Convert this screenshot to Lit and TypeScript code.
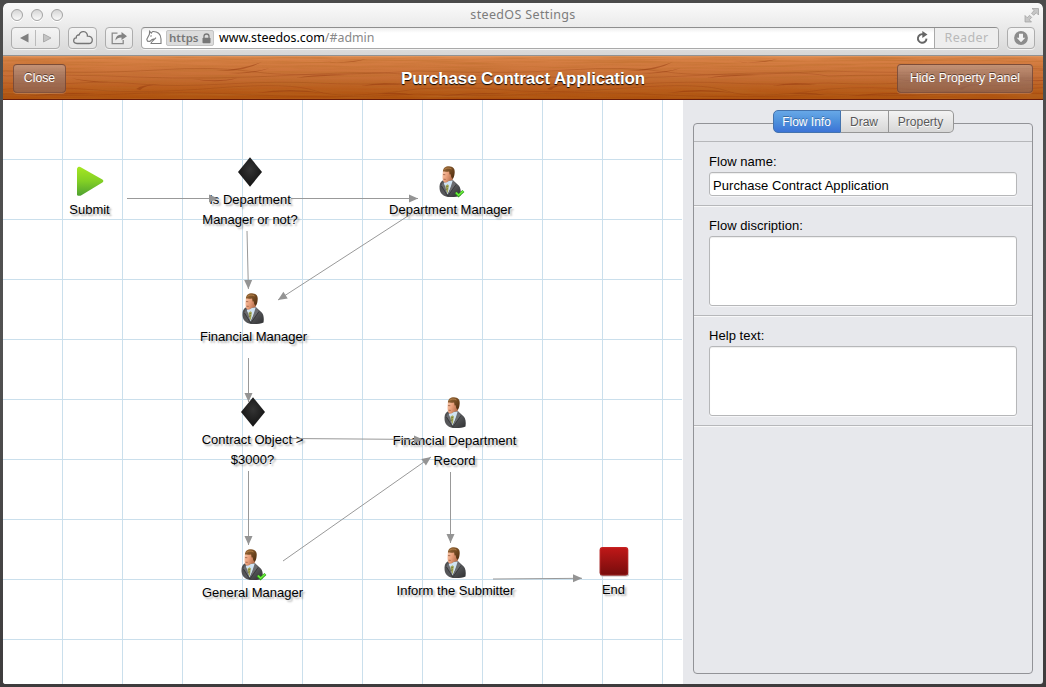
import { LitElement, html, svg, css } from "lit";
import { customElement, state } from "lit/decorators.js";

type Kind = "start" | "decision" | "person" | "approver" | "end";
interface FlowNode { kind: Kind; x: number; y: number; iconX: number; iconY: number; lines: string[]; }

// x is the label's centre, y the top of its first line, both in canvas coordinates.
const NODES: FlowNode[] = [
  { kind: "start", x: 86.5, y: 100, iconX: 73, iconY: 66, lines: ["Submit"] },
  { kind: "decision", x: 247, y: 90, iconX: 235, iconY: 57, lines: ["Is Department", "Manager or not?"] },
  { kind: "approver", x: 447.5, y: 100, iconX: 435, iconY: 65, lines: ["Department Manager"] },
  { kind: "person", x: 250.5, y: 227, iconX: 238, iconY: 192, lines: ["Financial Manager"] },
  { kind: "decision", x: 249.5, y: 330, iconX: 238, iconY: 297, lines: ["Contract Object >", "$3000?"] },
  { kind: "person", x: 451.5, y: 331, iconX: 440, iconY: 296, lines: ["Financial Department", "Record"] },
  { kind: "approver", x: 249.5, y: 483, iconX: 237, iconY: 448, lines: ["General Manager"] },
  { kind: "person", x: 452.5, y: 481, iconX: 440, iconY: 446, lines: ["Inform the Submitter"] },
  { kind: "end", x: 610.5, y: 480, iconX: 596, iconY: 446, lines: ["End"] },
];

const ARROWS: number[][] = [
  [124, 98.5, 215, 98.5],
  [288, 98.5, 415, 98.5],
  [244, 131, 245.4, 189],
  [408, 114, 275, 200],
  [245.5, 258, 245.5, 302],
  [288, 338.5, 420, 339.5],
  [245.5, 371, 245.5, 445],
  [280, 461, 428, 357],
  [447.5, 372, 447.5, 443],
  [490, 479, 579, 478.3],
];

const tick = svg`<path d="M17.8 27.6l2.8 3 4.8-4.6" fill="none" stroke="#2f9c1d" stroke-width="2.8"/><path d="M17.9 27.4l2.7 2.8 4.6-4.2" fill="none" stroke="#6df23c" stroke-width="1.5"/>`;

function person(approver: boolean) {
  return html`<svg width="27" height="34" viewBox="0 0 27 34">
    <defs>
      <linearGradient id="suit" x1="0" y1="0" x2="1" y2="1"><stop offset="0" stop-color="#4a4a4c"/><stop offset=".5" stop-color="#58595c"/><stop offset="1" stop-color="#2e2f31"/></linearGradient>
      <linearGradient id="skin" x1="0" y1="0" x2="1" y2=".5"><stop offset="0" stop-color="#fbd0b3"/><stop offset=".5" stop-color="#eaa17d"/><stop offset="1" stop-color="#b26a48"/></linearGradient>
      <linearGradient id="hair" x1="0" y1="0" x2="1" y2="1"><stop offset="0" stop-color="#9a6a38"/><stop offset="1" stop-color="#4c2a0d"/></linearGradient>
    </defs>
    <path d="M4.500 15.500C2 17 1.200 20 1.600 24c.4 4.300 3.600 7.400 8.200 7.900 4.700.4 9.600 0 12.700-1.500.7-4.300.1-8.400-2-10.200L15 15.200z" fill="url(#suit)"/>
    <path d="M5.600 17.800l4.200-1.600 4.700-.6 1 1.700-3.400 6.700-2.600 5.600-2.500-5z" fill="#cfe3f3"/>
    <path d="M7.600 20.400l2.200-1.200 1 1.400-1 8-2.200-4.600z" fill="#a9a957"/>
    <path d="M7.900 22l2.400-.8M8 24.400l2-.7" stroke="#6f7736" stroke-width=".8"/>
    <path d="M5 16.800l-1.500 4 6.200 10-2.400-9zM14.800 15.200l3.200 4.200-3.800 5.200-4.500 6.400 2.400-7.300z" fill="#6b6c70"/>
    <path d="M9.900 31l4.500-6.400 3.700-5.200M3.500 21l6.200 10" fill="none" stroke="#2b2c2e" stroke-width=".7"/>
    <path d="M5 6c-.3 2-.6 3.800-.5 6 .1 2.200.5 5 2 5.600 1.500.5 2.700-.2 3.900-1.500l4.300-1.200.4-3.400L16 6l-5-3z" fill="url(#skin)"/>
    <path d="M4.900 6.500C5 3 7.700 1.200 11 1.300c4 .2 6 2.500 5.700 5.900-.2 2.600-.6 4.800-1.900 6.900l-1.500-1.800-.7-3.100-1 .4-.5-3.200C9.200 6.800 7 6.700 4.900 6.500z" fill="url(#hair)"/>
    <path d="M6.500 4.400c2-1.700 4.600-1.700 7-.4" fill="none" stroke="#bd8850" stroke-width=".8"/>
    <path d="M5 9.600l2.300.1M5.500 14.200l2.200.2" stroke="#8d4f37" stroke-width=".7"/>
    ${approver ? tick : null}
  </svg>`;
}

function icon(kind: Kind) {
  switch (kind) {
    case "start":
      return html`<svg width="30" height="32" viewBox="0 0 30 32">
        <defs><linearGradient id="g" x1="0" y1="0" x2="0" y2="1"><stop offset="0" stop-color="#a6e622"/><stop offset=".5" stop-color="#82cf25"/><stop offset="1" stop-color="#4fa131"/></linearGradient></defs>
        <path d="M2 1.200c1.200-.6 2.200-.3 3.200.2L26.400 13.600c1.300.8 1.300 2.100 0 3L5.400 29.200c-1 .6-3.400 1-4.400-.3V3Q1 1.700 2 1.200z" fill="url(#g)"/></svg>`;
    case "decision":
      return html`<svg width="24" height="30" viewBox="0 0 24 30">
        <defs><radialGradient id="d" cx=".5" cy=".42" r=".6"><stop offset="0" stop-color="#343434"/><stop offset="1" stop-color="#111"/></radialGradient></defs>
        <path d="M12 0.200L24 15 12 29.800 0 15z" fill="url(#d)"/></svg>`;
    case "end":
      return html`<svg width="32" height="32" viewBox="0 0 32 32">
        <defs><linearGradient id="r" x1="0" y1="0" x2="0" y2="1"><stop offset="0" stop-color="#c11818"/><stop offset="1" stop-color="#750c0c"/></linearGradient></defs>
        <rect x="1" y="27" width="29" height="3.500" rx="2" fill="#c5b9b9"/>
        <rect x=".6" y="1" width="28.700" height="28.600" rx="3" fill="url(#r)"/>
        <rect x="1.300" y="1.700" width="27.300" height="27.200" rx="2.500" fill="none" stroke="#d94343" stroke-opacity=".3"/></svg>`;
    default:
      return person(kind === "approver");
  }
}

@customElement("browser-bar")
class BrowserBar extends LitElement {
  static styles = css`
    :host { display: grid; grid-template-rows: 23px 30px; height: 53px; box-sizing: border-box; border-bottom: 1px solid #929292; border-radius: 5px 5px 0 0; background: linear-gradient(#fafafa, #e9e9e9 50%, #d7d7d7); color: #777; }
    .titlebar { display: grid; grid-template-columns: 80px 1fr 80px; align-items: center; }
    .lights { display: flex; gap: 8px; padding-left: 8px; }
    .light { width: 12px; height: 12px; box-sizing: border-box; border: 1px solid #a3a3a3; border-radius: 50%; background: linear-gradient(#d6d6d6, #fafafa); box-shadow: 0 1px 0 #fff; }
    .title { text-align: center; font: 12.5px/22px "Noto Sans", sans-serif; color: #7c7c7c; letter-spacing: .35px; }
    .expand { justify-self: end; padding-right: 3px; height: 16px; }
    .tools { display: flex; padding: 1px 8px 0; }
    .btn { height: 22px; box-sizing: border-box; border: 1px solid #adadad; border-radius: 4px; background: linear-gradient(#f4f4f4, #e5e5e5); display: flex; align-items: center; justify-content: center; box-shadow: 0 1px 0 #f4f4f4; }
    .nav { width: 49px; } .cloud { width: 29px; margin-left: 8px; } .share { width: 28px; margin-left: 8px; }
    .address { flex: 1; margin-left: 8px; height: 22px; box-sizing: border-box; display: flex; align-items: center; border: 1px solid #a9a9a9; border-top-color: #8e8e8e; border-radius: 4px; background: linear-gradient(#eee, #fff 5px); overflow: hidden; font: 12.4px/20px "Noto Sans", sans-serif; box-shadow: 0 1px 0 #f4f4f4; }
    .horse { margin-left: 4px; }
    .https { display: flex; align-items: center; gap: 3px; height: 16px; box-sizing: border-box; margin-left: 4px; width: 48px; padding-left: 2px; border: 1px solid #c4c4c4; border-radius: 2px; background: #dcdcdc; color: #777; font-size: 11.5px; font-weight: 600; line-height: 14px; }
    .url { margin-left: 5px; color: #000; flex: 1; white-space: nowrap; } .path { color: #888; }
    .reader { width: 63px; height: 20px; margin-left: 5px; border-left: 1px solid #a9a9a9; background: #eee; color: #b9b9b9; text-align: center; font-size: 12.5px; letter-spacing: .35px; }
    .down { width: 28px; margin-left: 8px; }
  `;
  render() {
    return html`
      <div class="titlebar">
        <div class="lights"><span class="light"></span><span class="light"></span><span class="light"></span></div>
        <div class="title">steedOS Settings</div>
        <svg class="expand" width="16" height="16" viewBox="0 0 16 16"><path d="M8 1.500h6.500V8l-2.200-2.200L9.600 8.300 7.500 6.200l2.700-2.600zM1 15h6.500l-2.200-2.200 2.400-2.400-2.100-2.100-2.400 2.400L1 8.500z" fill="#c6c6c6" stroke="#9d9d9d" stroke-width=".7"/></svg>
      </div>
      <div class="tools">
        <div class="btn nav"><svg width="47" height="20"><path d="M16.500 5.500v9L8 10z" fill="#808080"/><path d="M23.500 2v16" stroke="#bbb"/><path d="M31.500 6v8l7.500-4z" fill="#c4c4c4" stroke="#999" stroke-width=".7"/></svg></div>
        <div class="btn cloud"><svg width="22" height="16" viewBox="0 0 22 16"><path d="M5 13.500C2.500 13.500 1.500 12 1.700 10.400 1.900 8.700 3 7.800 4.300 7.900 4 6 5.300 4.700 7 5.100 7.800 2.600 9.600 1.500 11.700 1.700c2.500.2 3.900 2 3.700 4.400 2.900-.2 4.900 1.300 4.900 3.600S18.700 13.500 16.900 13.500z" fill="none" stroke="#757575" stroke-width="1.300"/></svg></div>
        <div class="btn share"><svg width="18" height="16" viewBox="0 0 18 16"><path d="M7.500 3.200H2.200v10.400h11V10" fill="none" stroke="#8a8a8a" stroke-width="1.300"/><path d="M5.500 10.500c.2-4 2.300-5.700 6-5.700V2L17 6.200l-5.500 3.700V7.400C8.300 7.400 6.800 8.400 5.500 10.500z" fill="#828282"/></svg></div>
        <div class="address">
          <svg class="horse" width="16" height="16" viewBox="0 0 16 16"><path d="M6.500 1.500C11.500 1.200 15 4 15 9v4.500H5c.3-2.200 2.500-2.800 3.800-4.600M6.500 1.500L5.300 3.200 3.600 1.300l-.2 3L.8 9.300l.7 1.900 2.400.2L6 9.600l2.800-.7L10 7.600M4.300 6.300l1.500-.5" fill="none" stroke="#7d7d7d" stroke-width="1.100"/></svg>
          <span class="https">https<svg width="9" height="11" viewBox="0 0 9 11"><path d="M2 5V3.300Q2 1 4.500 1T7 3.300V5" fill="none" stroke="#777" stroke-width="1.300"/><rect x=".5" y="4.800" width="8" height="5.500" rx=".8" fill="#777"/></svg></span>
          <span class="url">www.steedos.com<span class="path">/#admin</span></span>
          <svg width="13" height="14" viewBox="0 0 13 14"><path d="M10.500 7.600A4.300 4.300 0 1 1 7.300 3.300" fill="none" stroke="#666" stroke-width="1.900"/><path d="M6.300 0l5.200 3.600-5.200 3.300z" fill="#666"/></svg>
          <span class="reader">Reader</span>
        </div>
        <div class="btn down"><svg width="16" height="16" viewBox="0 0 16 16"><circle cx="8" cy="8" r="6.900" fill="#8c8c8c"/><path d="M6 3.800h4v4h2.300L8 12.300 3.700 7.800H6z" fill="#f3f3f3"/></svg></div>
      </div>`;
  }
}

@customElement("wood-header")
class WoodHeader extends LitElement {
  static styles = css`
    :host { display: block; height: 44px; color: #fff; }
    .bar { display: grid; grid-template: 44px / 1fr; height: 44px; }
    .wood, .content { grid-area: 1 / 1; }
    .wood { display: block; width: 100%; height: 44px; }
    .content { z-index: 1; display: grid; grid-template-columns: 200px 1fr 200px; align-items: start; padding: 8px 10px 0; }
    .btn { height: 29px; box-sizing: border-box; border: 1px solid rgba(112,66,48,.75); border-radius: 4px; background: linear-gradient(rgba(190,160,148,.66), rgba(150,118,108,.68) 50%, rgba(138,102,90,.68)); box-shadow: 0 1px 0 rgba(255,255,255,.18); color: #fff; font: 12.3px/27px "Liberation Sans", sans-serif; text-shadow: 0 -1px 0 rgba(0,0,0,.5); padding: 0; }
    .btn:first-child { justify-self: start; width: 53px; }
    .btn:last-child { justify-self: end; width: 136px; }
    .title { text-align: center; font: bold 17px/30px "Liberation Sans", sans-serif; letter-spacing: -.13px; text-shadow: 0 1px 1px #000; white-space: nowrap; }
  `;
  render() {
    return html`<div class="bar">
      <svg class="wood" width="1040" height="44">
        <defs>
          <linearGradient id="base" x1="0" y1="0" x2="0" y2="1"><stop offset="0" stop-color="#de8c50"/><stop offset=".1" stop-color="#d67f44"/><stop offset=".5" stop-color="#c66d34"/><stop offset=".75" stop-color="#b95c1b"/><stop offset="1" stop-color="#ab4f0a"/></linearGradient>
          <filter id="grain" x="0" y="0" width="100%" height="100%"><feTurbulence type="fractalNoise" baseFrequency=".012 .5" numOctaves="3" seed="7"/><feColorMatrix values="0 0 0 0 .48  0 0 0 0 .15  0 0 0 0 .02  2.4 0 0 0 -.95"/></filter>
          <pattern id="streaks" x="3" width="411" height="44" patternUnits="userSpaceOnUse">
            <g fill="none" stroke="#8a3108" stroke-opacity=".3" stroke-width=".8">
              <path d="M0 33q45-3 90 1t120-2 100 3 101-2M0 38q60 3 115 0t135 1 161-1M0 15q90 3 150-1t100 2 161-1M0 20q60-2 130 1t160-2 121 1M0 27q45 2 73 0t60 1 86 0 92-1 100 0"/>
            </g>
            <g fill="#8c2f06" fill-opacity=".42">
              <path d="M210 15q23-1 46-9-18 10-46 9M222 17q25 0 42-5-18 7-42 5M315 5q20 3 46-2-20 6-46 2M65 22q15 3 40 4-25 1-40-4M130 33q8-6 30-4-20-1-26 5zM187 23q25 3 45-1-20 6-45 1M290 22q18-4 53-3-30 1-53 3M20 40q40-5 72-2-36 0-72 2M250 37q34-6 68 0-34-3-68 0M355 30q20-5 45-1-24-1-45 1M372 38q20-3 36 1-20-1-36-1"/>
            </g>
          </pattern>
        </defs>
        <rect width="1040" height="44" fill="url(#base)"/>
        <rect width="1040" height="44" filter="url(#grain)" opacity=".5"/>
        <rect width="1040" height="44" fill="url(#streaks)"/>
        <path d="M0 .5h1040" stroke="#e39b65" stroke-opacity=".6"/><path d="M0 43.500h1040" stroke="#6b1d08"/>
      </svg>
      <div class="content"><button class="btn">Close</button><div class="title">Purchase Contract Application</div><button class="btn">Hide Property Panel</button></div>
    </div>`;
  }
}

@customElement("flow-canvas")
class FlowCanvas extends LitElement {
  static styles = css`
    :host { display: block; position: relative; overflow: hidden; background-color: #fff; background-image: linear-gradient(90deg, transparent 59px, #cadfec 59px), linear-gradient(#fff 59px, #cadfec 59px); background-size: 60px 60px; border-right: 1px solid #fff; }
    .icon { position: absolute; line-height: 0; }
    .label { position: absolute; transform: translateX(-50%); white-space: nowrap; text-align: center; font: 13px/20px "Liberation Sans", sans-serif; color: #000; text-shadow: 2px 2px 2px rgba(0,0,0,.33); }
    .line { display: block; }
    .arrows { position: absolute; left: 0; top: 0; }
  `;
  private arrow([x1, y1, x2, y2]: number[]) {
    const angle = (Math.atan2(y2 - y1, x2 - x1) * 180) / Math.PI;
    return svg`<path d="M${x1} ${y1}L${x2} ${y2}" stroke="#999"/><path d="M0 0L-9 -4V4z" fill="#949494" transform="translate(${x2} ${y2}) rotate(${angle})"/>`;
  }
  render() {
    return html`
      ${NODES.map((n) => html`
        <div class="icon" style="left:${n.iconX}px;top:${n.iconY}px">${icon(n.kind)}</div>
        <div class="label" style="left:${n.x}px;top:${n.y}px">${n.lines.map((l) => html`<span class="line">${l}</span>`)}</div>`)}
      <svg class="arrows" width="679" height="584">${ARROWS.map((a) => this.arrow(a))}</svg>`;
  }
}

@customElement("property-panel")
class PropertyPanel extends LitElement {
  @state() private active = "Flow Info";
  static styles = css`
    :host { display: flex; flex-direction: column; background: #e7e8ec; padding: 10px; font: 13px "Liberation Sans", sans-serif; box-sizing: border-box; }
    .tabs { display: flex; align-self: center; height: 23px; z-index: 1; }
    .tab { box-sizing: border-box; height: 23px; border: 1px solid #969696; border-left-width: 0; padding: 0; background: linear-gradient(#f3f3f3, #d7d7d7); color: #575757; font: 12px/20px "Liberation Sans", sans-serif; text-shadow: 0 1px 0 #fff; width: 48px; }
    .tab:first-child { border-left-width: 1px; border-radius: 5px 0 0 5px; width: 68px; }
    .tab:last-child { border-radius: 0 5px 5px 0; width: 65px; }
    .tab.active { background: linear-gradient(#67a8e7, #4d90dc 50%, #3c73d6); border-color: #4473ad; color: #fff; text-shadow: 0 -1px 0 rgba(0,0,0,.3); }
    .frame { flex: 1; border: 1px solid #929397; border-radius: 4px; margin-top: -10px; padding-top: 17px; }
    .section { display: block; border-top: 1px solid #b6b7ba; box-shadow: inset 0 1px 0 #f8f8f9; padding: 12px 15px 9px; }
    .section:first-child { box-shadow: none; }
    .end { border-top: 1px solid #b6b7ba; box-shadow: inset 0 1px 0 #f8f8f9; height: 2px; }
    .caption { display: block; height: 18px; line-height: 16px; color: #000; letter-spacing: .04px; }
    .field { display: block; width: 100%; box-sizing: border-box; height: 24px; border: 1px solid #b6b7b9; border-radius: 3px; background: #fff; box-shadow: inset 0 1px 1px #eee, 0 1px 0 #f6f6f8; padding: 2px 3px 0; font: 13px/20px "Liberation Sans", sans-serif; letter-spacing: .06px; color: #000; resize: none; outline: 0; }
    .area { height: 70px; }
  `;
  render() {
    return html`
      <div class="tabs">${["Flow Info", "Draw", "Property"].map((t) => html`<button class="tab ${t === this.active ? "active" : ""}" @click=${() => (this.active = t)}>${t}</button>`)}</div>
      <div class="frame">
        <label class="section"><span class="caption">Flow name:</span><input class="field" value="Purchase Contract Application"></label>
        <label class="section"><span class="caption">Flow discription:</span><textarea class="field area"></textarea></label>
        <label class="section"><span class="caption">Help text:</span><textarea class="field area"></textarea></label>
        <div class="end"></div>
      </div>`;
  }
}

@customElement("app-root")
class AppRoot extends LitElement {
  static styles = css`
    :host { display: block; width: 1046px; height: 687px; box-sizing: border-box; padding: 3px; background: linear-gradient(#4b4b4b, #525252 50%, #3e3c3d); overflow: hidden; }
    .window { display: grid; grid-template-rows: 53px 44px 584px; height: 681px; border-radius: 5px 5px 3px 3px; overflow: hidden; }
    .body { display: grid; grid-template-columns: 680px 360px; min-height: 0; }
  `;
  render() {
    return html`<div class="window"><browser-bar></browser-bar><wood-header></wood-header><div class="body"><flow-canvas></flow-canvas><property-panel></property-panel></div></div>`;
  }
}
